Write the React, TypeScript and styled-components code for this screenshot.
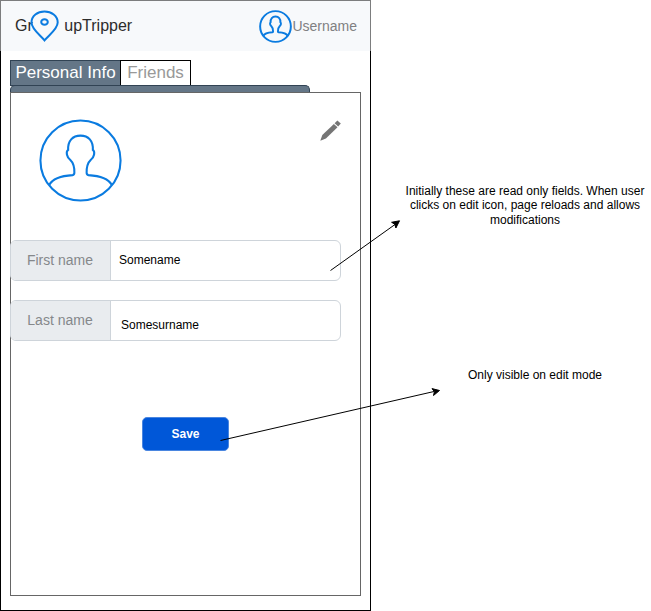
import React from "react";
import styled, { createGlobalStyle } from "styled-components";

const GlobalStyle = createGlobalStyle`
  *, *::before, *::after { box-sizing: border-box; }
  body {
    margin: 0;
    background: #fff;
    color: #000;
    font-family: "Liberation Sans", Arial, sans-serif;
    font-size: 12px;
    line-height: 14.4px;
  }
`;

const Board = styled.div`
  position: relative;
  display: flex;
  width: 651px;
  height: 611px;
  overflow: hidden;
`;

const Phone = styled.div`
  display: flex;
  flex-direction: column;
  width: 371px;
  height: 611px;
`;

const Header = styled.header`
  display: flex;
  align-items: center;
  justify-content: space-between;
  height: 51px;
  padding: 0 13px 0 14px;
  border: 1px solid #7c7d7e;
  border-bottom: 0;
  background: #f7f9fb;
`;

const Brand = styled.div`
  display: flex;
  align-items: center;
  font-size: 16px;
  line-height: 20px;
  color: #2c2c2c;
`;

const Pin = styled.svg`
  display: block;
  flex: none;
  margin: 0 4.5px 0 -3px;
`;

const Account = styled.div`
  display: flex;
  align-items: center;
  font-size: 14px;
  line-height: 20px;
  color: #7f8082;
`;

const Body = styled.main`
  display: flex;
  flex: 1;
  flex-direction: column;
  padding: 9px 9px 14px;
  border: 1px solid #000;
  border-top: 0;
`;

const Tabs = styled.nav`
  display: flex;
  height: 26px;
`;

const Tab = styled.button<{ $active?: boolean }>`
  width: ${(p) => (p.$active ? "111px" : "71px")};
  margin: 0 -1px 0 0;
  padding: 0;
  border: 1px solid ${(p) => (p.$active ? "#314354" : "#000")};
  background: ${(p) => (p.$active ? "#647687" : "#fff")};
  color: ${(p) => (p.$active ? "#fff" : "#999")};
  font: 17px/22px "Liberation Sans", Arial, sans-serif;
  white-space: nowrap;
`;

const TabBar = styled.div`
  flex: none;
  width: 300px;
  height: 8px;
  margin-top: -1px;
  border: 1px solid #314354;
  border-bottom: 0;
  border-radius: 5px 5px 0 0;
  background: #647687;
`;

const Panel = styled.section`
  display: flex;
  flex: 1;
  flex-direction: column;
  margin-top: -1px;
  border: 1px solid #666;
`;

const ProfileRow = styled.div`
  display: flex;
  align-items: flex-start;
  justify-content: space-between;
  height: 147px;
  padding: 26px 19px 0 28px;
`;

const PencilIcon = styled.svg`
  display: block;
  margin-top: 1px;
`;

const Fields = styled.div`
  display: flex;
  flex-direction: column;
  gap: 19px;
  margin-left: -1px;
`;

const Field = styled.div`
  display: flex;
  width: 331px;
  height: 41px;
  border: 1px solid #ced4da;
  border-radius: 6px;
  background: #fff;
  overflow: hidden;
`;

const FieldLabel = styled.div`
  display: flex;
  flex: none;
  align-items: center;
  justify-content: center;
  width: 100px;
  padding-right: 1px;
  border-right: 1px solid #ced4da;
  background: #e9ecef;
  color: #85888b;
  font-size: 14px;
`;

const FieldValue = styled.div<{ $top: number; $left: number }>`
  padding: ${(p) => p.$top}px 0 0 ${(p) => p.$left}px;
`;

const SaveButton = styled.button`
  width: 87px;
  height: 34px;
  margin: 76px 0 0 131px;
  padding: 0;
  border: 1px solid #4a86e0;
  border-radius: 5px;
  background: #0057d8;
  color: #fff;
  font: bold 12px/14px "Liberation Sans", Arial, sans-serif;
`;

const Notes = styled.aside`
  display: flex;
  flex-direction: column;
  align-items: flex-start;
  width: 280px;
  padding-top: 184px;
  text-align: center;
`;

const Note = styled.p<{ $left: number; $width: number; $gap?: number }>`
  width: ${(p) => p.$width}px;
  margin: ${(p) => p.$gap ?? 0}px 0 0 ${(p) => p.$left}px;
`;

const Connectors = styled.svg`
  position: absolute;
  inset: 0;
  pointer-events: none;
`;

function Avatar({ size, stroke }: { size: number; stroke: number }) {
  return (
    <svg width={size} height={size} viewBox="0 0 84 84" fill="none" stroke="#0a7be0" strokeWidth={stroke}>
      <circle cx="42" cy="42" r={42 - stroke / 2 - 0.4} />
      <path d="M10.5 66.500C14 60 23 57.500 34 56.800Q35.800 56.500 35.800 54.500C36 47 34.500 44 31.500 41.200C28 38.500 27 33 29.500 31.300C29 22 34 16.800 42 16.800S55 22 54.500 31.300C57 33 56 38.500 52.500 41.200C49.500 44 48 47 48.200 54.500Q48.200 56.500 50 56.800C61 57.500 70 60 73.500 66.500" />
    </svg>
  );
}

export default function App() {
  return (
    <>
      <GlobalStyle />
      <Board>
        <Phone>
          <Header>
            <Brand>
              <span>Gr</span>
              <Pin width="30" height="32" viewBox="0 0 30 32" fill="none" stroke="#0a7be0" strokeWidth="2">
                <path d="M14.500 30.400C10 25 1.500 19 1.500 12.500C1.500 6 7.500 1.500 14.500 1.500S27.700 6 27.700 12.500C27.700 19 19 25 14.500 30.400Z" />
                <ellipse cx="14.500" cy="12" rx="3.300" ry="2.800" />
              </Pin>
              <span>upTripper</span>
            </Brand>
            <Account>
              <Avatar size={33} stroke={5} />
              <span>Username</span>
            </Account>
          </Header>
          <Body>
            <Tabs>
              <Tab $active>Personal Info</Tab>
              <Tab>Friends</Tab>
            </Tabs>
            <TabBar />
            <Panel>
              <ProfileRow>
                <Avatar size={83} stroke={2.1} />
                <PencilIcon width="21" height="21" viewBox="0 0 21 21" fill="#757575">
                  <path d="M0.300 20.700L2.300 14.900L13.900 3.900L17.500 7.200L5.900 18.500Z" />
                  <path d="M14.600 3.200L17.400 0.400L20.800 3.500L18.200 6.500Z" />
                </PencilIcon>
              </ProfileRow>
              <Fields>
                <Field>
                  <FieldLabel>First name</FieldLabel>
                  <FieldValue $top={12} $left={8}>Somename</FieldValue>
                </Field>
                <Field>
                  <FieldLabel>Last name</FieldLabel>
                  <FieldValue $top={17} $left={10}>Somesurname</FieldValue>
                </Field>
              </Fields>
              <SaveButton>Save</SaveButton>
            </Panel>
          </Body>
        </Phone>
        <Notes>
          <Note $left={29} $width={250}>
            Initially these are read only fields. When user clicks on edit icon, page reloads and allows modifications
          </Note>
          <Note $left={84} $width={160} $gap={141}>Only visible on edit mode</Note>
        </Notes>
        <Connectors width="651" height="611" stroke="#000">
          <path d="M330.500 270.500L395 224.500M220.500 440.500L434 391.500" fill="none" />
          <path d="M399.500 220.800L395.900 228L394.800 224.200L391.600 222.300Z" />
          <path d="M439.500 390.500L433.500 395.500L434.400 391.700L432 388.600Z" />
        </Connectors>
      </Board>
    </>
  );
}
